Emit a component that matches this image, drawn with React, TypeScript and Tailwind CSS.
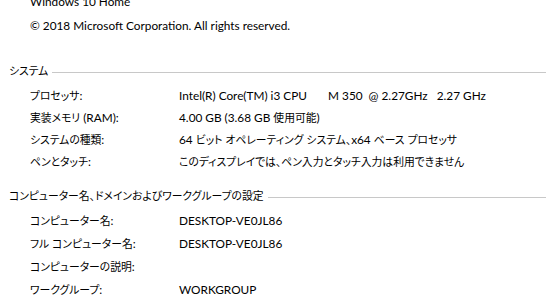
import React from 'react';

const systemRows = [
  { label: 'プロセッサ:', value: 'Intel(R) Core(TM) i3 CPU       M 350  @ 2.27GHz   2.27 GHz' },
  { label: '実装メモリ (RAM):', value: '4.00 GB (3.68 GB 使用可能)' },
  { label: 'システムの種類:', value: '64 ビット オペレーティング システム、x64 ベース プロセッサ' },
  { label: 'ペンとタッチ:', value: 'このディスプレイでは、ペン入力とタッチ入力は利用できません' },
];

const computerRows = [
  { label: 'コンピューター名:', value: 'DESKTOP-VE0JL86' },
  { label: 'フル コンピューター名:', value: 'DESKTOP-VE0JL86' },
  { label: 'コンピューターの説明:', value: '' },
  { label: 'ワークグループ:', value: 'WORKGROUP' },
];

// 日本語部分だけ少し小さくする
function JpText({ text }: { text: string }) {
  const parts = text.split(/([\u3000-\u30ff\u4e00-\u9fff\uff00-\uffef]+)/);
  return (
    <>
      {parts.map((p, i) =>
        i % 2 === 1 ? (
          <span key={i} className="text-[10.8px] [font-feature-settings:'palt']">
            {p}
          </span>
        ) : (
          <React.Fragment key={i}>{p}</React.Fragment>
        )
      )}
    </>
  );
}

function SectionHeader({ title }: { title: string }) {
  return (
    <div className="flex items-center leading-[16px]">
      <span className="pl-[9px] whitespace-nowrap">
        <JpText text={title} />
      </span>
      <div className="flex-1 h-px bg-[#c8c8c8] ml-[4px] mt-[3px]"></div>
    </div>
  );
}

function InfoRow({ label, value, height }: { label: string; value: string; height: string }) {
  return (
    <div className={`flex items-center pl-[30px] ${height}`}>
      <span className="w-[149px] shrink-0 whitespace-nowrap">
        <JpText text={label} />
      </span>
      <span className="whitespace-pre">
        <JpText text={value} />
      </span>
    </div>
  );
}

export default function App() {
  return (
    <div
      className="w-[546px] h-[307px] overflow-hidden bg-white text-[11.8px] text-[#000000]"
      style={{ fontFamily: 'Lato, "Noto Sans CJK JP", sans-serif' }}
    >
      {/* 版本資訊 */}
      <div className="pl-[30px] leading-[16px] mt-[-6px]">Windows 10 Home</div>
      <div className="pl-[30px] leading-[16px] mt-[8px]">© 2018 Microsoft Corporation. All rights reserved.</div>

      {/* システム */}
      <div className="mt-[29px]">
        <SectionHeader title="システム" />
        <div className="mt-[6px]">
          {systemRows.map((row) => (
            <InfoRow key={row.label} label={row.label} value={row.value} height="h-[22px]" />
          ))}
        </div>
      </div>

      {/* コンピューター名 */}
      <div className="mt-[15px]">
        <SectionHeader title="コンピューター名、ドメインおよびワークグループの設定" />
        <div className="mt-[5px]">
          {computerRows.map((row) => (
            <InfoRow key={row.label} label={row.label} value={row.value} height="h-[23px]" />
          ))}
        </div>
      </div>
    </div>
  );
}
